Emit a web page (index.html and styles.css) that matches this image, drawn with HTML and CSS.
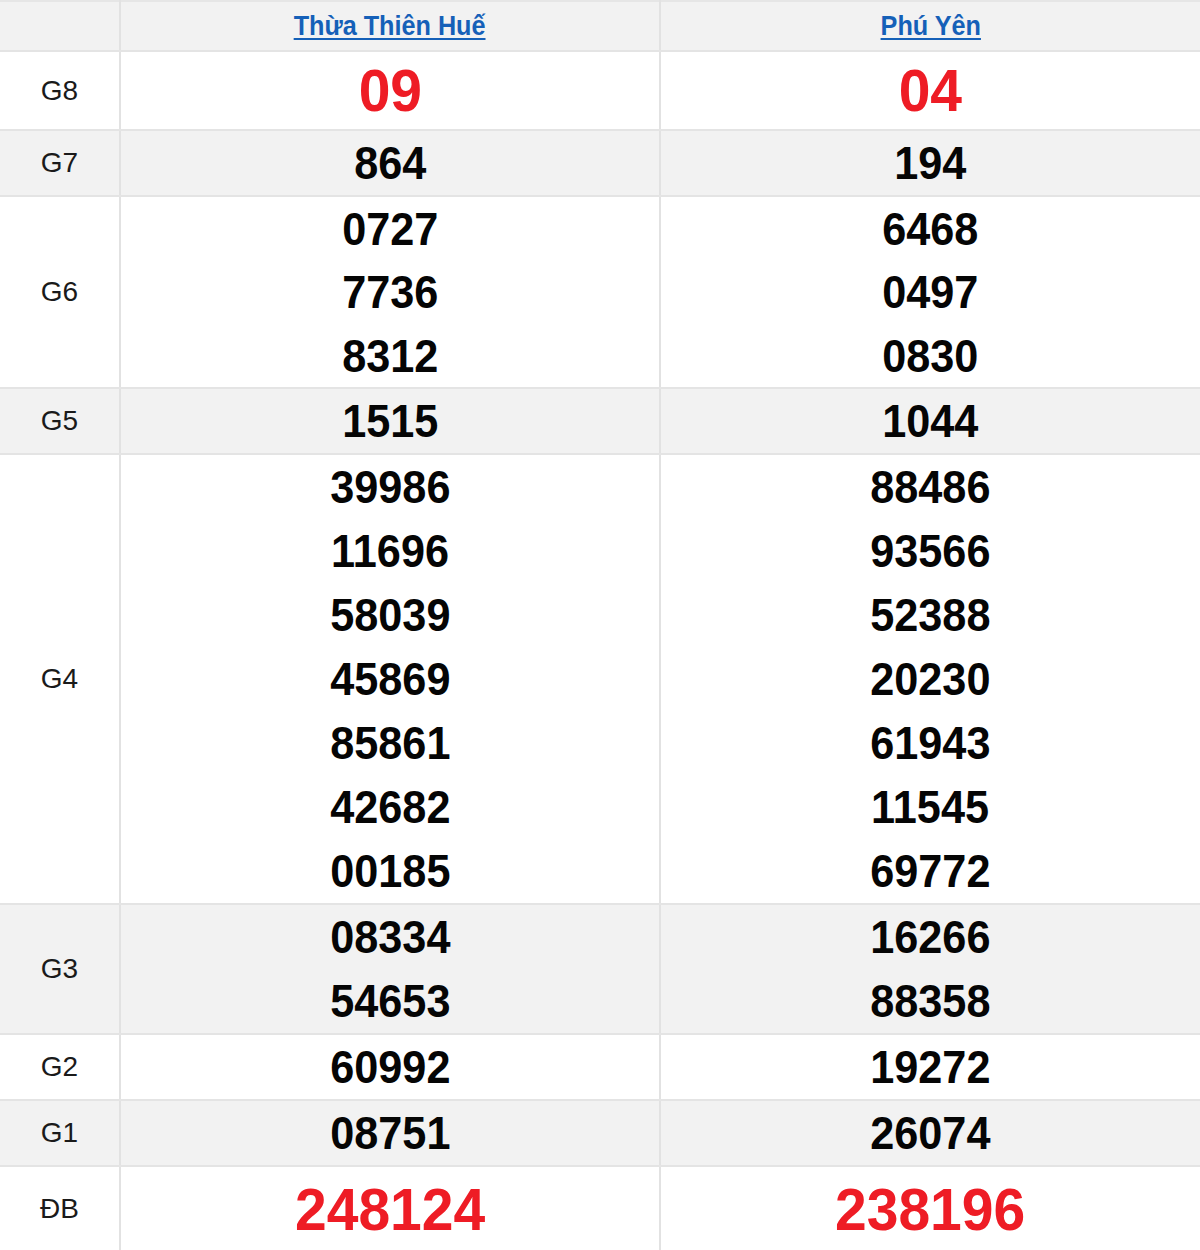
FILE: index.html
```html
<!DOCTYPE html>
<html lang="vi">
<head>
<meta charset="utf-8">
<title>Kết quả xổ số</title>
<link rel="stylesheet" href="styles.css">
</head>
<body>
<table class="kq">
  <colgroup><col class="c-label"><col class="c-prov"><col class="c-prov"></colgroup>
  <thead>
    <tr class="hd">
      <th></th>
      <th><a href="#"><span class="sq">Thừa Thiên Huế</span></a></th>
      <th><a href="#"><span class="sq">Phú Yên</span></a></th>
    </tr>
  </thead>
  <tbody>
    <tr class="g8">
      <td class="lb">G8</td>
      <td><div class="big"><span class="sq">09</span></div></td>
      <td><div class="big"><span class="sq">04</span></div></td>
    </tr>
    <tr class="alt">
      <td class="lb">G7</td>
      <td><div class="n"><span class="sq">864</span></div></td>
      <td><div class="n"><span class="sq">194</span></div></td>
    </tr>
    <tr class="g6">
      <td class="lb">G6</td>
      <td><div class="n"><span class="sq">0727</span></div><div class="n"><span class="sq">7736</span></div><div class="n"><span class="sq">8312</span></div></td>
      <td><div class="n"><span class="sq">6468</span></div><div class="n"><span class="sq">0497</span></div><div class="n"><span class="sq">0830</span></div></td>
    </tr>
    <tr class="alt">
      <td class="lb">G5</td>
      <td><div class="n"><span class="sq">1515</span></div></td>
      <td><div class="n"><span class="sq">1044</span></div></td>
    </tr>
    <tr>
      <td class="lb">G4</td>
      <td><div class="n"><span class="sq">39986</span></div><div class="n"><span class="sq">11696</span></div><div class="n"><span class="sq">58039</span></div><div class="n"><span class="sq">45869</span></div><div class="n"><span class="sq">85861</span></div><div class="n"><span class="sq">42682</span></div><div class="n"><span class="sq">00185</span></div></td>
      <td><div class="n"><span class="sq">88486</span></div><div class="n"><span class="sq">93566</span></div><div class="n"><span class="sq">52388</span></div><div class="n"><span class="sq">20230</span></div><div class="n"><span class="sq">61943</span></div><div class="n"><span class="sq">11545</span></div><div class="n"><span class="sq">69772</span></div></td>
    </tr>
    <tr class="alt">
      <td class="lb">G3</td>
      <td><div class="n"><span class="sq">08334</span></div><div class="n"><span class="sq">54653</span></div></td>
      <td><div class="n"><span class="sq">16266</span></div><div class="n"><span class="sq">88358</span></div></td>
    </tr>
    <tr>
      <td class="lb">G2</td>
      <td><div class="n"><span class="sq">60992</span></div></td>
      <td><div class="n"><span class="sq">19272</span></div></td>
    </tr>
    <tr class="alt">
      <td class="lb">G1</td>
      <td><div class="n"><span class="sq">08751</span></div></td>
      <td><div class="n"><span class="sq">26074</span></div></td>
    </tr>
    <tr class="db">
      <td class="lb">ĐB</td>
      <td><div class="big"><span class="sq">248124</span></div></td>
      <td><div class="big"><span class="sq">238196</span></div></td>
    </tr>
  </tbody>
</table>
</body>
</html>
```

FILE: styles.css
```css
html, body {
  margin: 0;
  padding: 0;
  background: #ffffff;
}

body {
  font-family: "Liberation Sans", Arial, sans-serif;
  color: #000;
}

.kq {
  width: 1200px;
  border-collapse: collapse;
  table-layout: fixed;
  border-top: 2px solid #e6e6e6;
}

.c-label { width: 120px; }
.c-prov { width: 540px; }

.kq th,
.kq td {
  padding: 0;
  text-align: center;
  vertical-align: middle;
  border-bottom: 2px solid #e4e4e4;
  border-left: 2px solid #e2e2e2;
}

.kq th:first-child,
.kq td:first-child {
  border-left: none;
}

.hd th {
  height: 48px;
  background: #f2f2f2;
  font-weight: bold;
  font-size: 28px;
  line-height: 48px;
}

.hd a {
  color: #1560b8;
  text-decoration: none;
}

.hd .sq {
  text-decoration: underline;
  text-decoration-thickness: 2px;
  text-underline-offset: 3px;
  transform: scaleX(0.9);
}

.alt td {
  background: #f2f2f2;
}

.lb {
  font-size: 28px;
  color: #1a1a1a;
}

.n {
  font-size: 47px;
  font-weight: bold;
  line-height: 64px;
  color: #050505;
}

.g6 .n {
  line-height: 63.4px;
}

.big {
  font-size: 60px;
  font-weight: bold;
  color: #ee1c25;
}

.g8 td { height: 77px; }
.db td { height: 84px; border-bottom: none; }

.sq {
  display: inline-block;
  transform: scaleX(0.92);
}

.big .sq {
  transform: scaleX(0.95);
}
```
